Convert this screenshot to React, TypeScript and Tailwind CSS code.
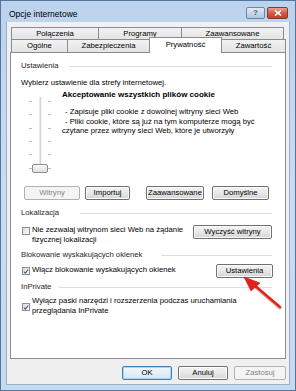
import React from 'react';

const font = { fontFamily: '"Liberation Sans", Arial, sans-serif' };

const btn =
  'h-[14px] flex items-center justify-center rounded-[2px] border border-[#707070] bg-linear-to-b from-[#f3f3f3] via-[#e8e8e8] to-[#d4d4d4] text-[7.7px] text-black leading-none shadow-[inset_0_0_0_1px_#fcfcfc]';
const btnDisabled =
  'h-[14px] flex items-center justify-center rounded-[2px] border border-[#adb2b5] bg-[#f4f4f4] text-[7.7px] text-[#838383] leading-none';

const GroupHeader: React.FC<{ label: string; line: string }> = ({ label, line }) => (
  <div className="flex items-center justify-between h-[10px] text-[7.7px] leading-[10px] text-[#1e1e1e]">
    <span>{label}</span>
    <div className={'h-px bg-[#d5dfe5] ' + line} />
  </div>
);

const Checkbox: React.FC<{ checked?: boolean; className?: string }> = ({ checked, className }) => (
  <div
    className={
      'w-[8px] h-[8px] shrink-0 border border-[#8e8f8f] bg-linear-to-br from-[#dcdcdc] to-[#fbfbfb] flex items-center justify-center ' +
      (className ?? '')
    }
  >
    {checked && (
      <svg width="7" height="7" viewBox="0 0 7 7">
        <path d="M1 3.6 L2.8 5.4 L6 1.2" fill="none" stroke="#3d5497" strokeWidth="1.3" />
      </svg>
    )}
  </div>
);

const Slider: React.FC = () => (
  <svg width="41" height="83" viewBox="0 0 41 83" className="shrink-0">
    <rect x="18.5" y="7" width="2" height="72" fill="#d6d6d6" />
    <rect x="20.5" y="7" width="1" height="72" fill="#ffffff" />
    {[11, 24, 38, 51, 64, 78].map((y) => (
      <g key={y}>
        <rect x="8" y={y} width="3" height="1" fill="#bdbdbd" />
        <rect x="27" y={y} width="3" height="1" fill="#bdbdbd" />
      </g>
    ))}
    <defs>
      <linearGradient id="thumb" x1="0" y1="0" x2="0" y2="1">
        <stop offset="0" stopColor="#fbfbfb" />
        <stop offset="1" stopColor="#dedede" />
      </linearGradient>
    </defs>
    <rect x="11.5" y="74.5" width="15" height="8" rx="1.5" fill="url(#thumb)" stroke="#8b8b8b" />
  </svg>
);

export default function App() {
  return (
    <div
      style={font}
      className="relative w-[296px] h-[391px] flex flex-col border border-[#56759c] bg-linear-to-b from-[#bcd3ee] via-[#c9dcf1] to-[#c6daf0] overflow-hidden"
    >
      {/* title bar */}
      <div className="h-[21px] shrink-0 flex items-start">
        <div className="mt-[8px] ml-[8px] text-[8.5px] leading-[10px] text-black">Opcje internetowe</div>
        <div className="ml-auto mt-[6px] mr-[7px] flex gap-[2px]">
          <div className="w-[19px] h-[12px] rounded-[2px] border border-[#6d84a3] bg-linear-to-b from-[#e3ecf7] via-[#c7d6ea] to-[#b3c7e1] flex items-center justify-center text-[8px] font-bold text-[#55657c] leading-none">
            ?
          </div>
          <div className="w-[21px] h-[12px] rounded-[2px] border border-[#7c3a33] bg-linear-to-b from-[#e8a193] via-[#d35845] to-[#c6402b] flex items-center justify-center">
            <svg width="8" height="6" viewBox="0 0 8 6">
              <path d="M1 0.5 L7 5.5 M7 0.5 L1 5.5" stroke="#ffffff" strokeWidth="1.6" />
            </svg>
          </div>
        </div>
      </div>

      {/* client area */}
      <div className="flex-1 mx-[5px] mb-[5px] bg-[#f0f0f0] flex flex-col pt-[5px] border border-[#9bb0c9] border-t-0">
        {/* tab row 1 */}
        <div className="h-[12px] flex pl-[4px] text-[7.7px] leading-none text-black">
          {[
            ['Połączenia', 'w-[88px]'],
            ['Programy', 'w-[84px]'],
            ['Zaawansowane', 'w-[103px]'],
          ].map(([t, w], i) => (
            <div
              key={t}
              className={
                w +
                ' h-full flex items-center justify-center border border-b-0 border-[#898c95] bg-linear-to-b from-[#f2f2f2] to-[#e4e4e4] ' +
                (i > 0 ? '-ml-px' : '')
              }
            >
              {t}
            </div>
          ))}
        </div>
        {/* tab row 2 */}
        <div className="h-[13px] flex pl-[4px] text-[7.7px] leading-none text-black relative z-10">
          <div className="w-[57px] h-full flex items-center justify-center border border-b-0 border-[#898c95] bg-linear-to-b from-[#f2f2f2] to-[#e4e4e4]">
            Ogólne
          </div>
          <div className="w-[83px] -ml-px h-full flex items-center justify-center border border-b-0 border-[#898c95] bg-linear-to-b from-[#f2f2f2] to-[#e4e4e4]">
            Zabezpieczenia
          </div>
          <div className="w-[73px] -ml-px -mt-[2px] h-[16px] flex items-start pt-[3px] justify-center border border-b-0 border-[#898c95] bg-white">
            Prywatność
          </div>
          <div className="w-[65px] -ml-px h-full flex items-center justify-center border border-b-0 border-[#898c95] bg-linear-to-b from-[#f2f2f2] to-[#e4e4e4]">
            Zawartość
          </div>
        </div>

        {/* panel */}
        <div className="ml-[3px] w-[276px] h-[307px] border border-[#898c95] bg-white pl-[10px] pr-[13px] pt-[8px] text-[7.7px] leading-[9.5px] text-black">
          <GroupHeader label="Ustawienia" line="w-[203px]" />
          <div className="mt-[7px] h-[10px] leading-[10px]">Wybierz ustawienie dla strefy internetowej.</div>

          <div className="mt-[2px] flex">
            <Slider />
            <div className="flex flex-col">
              <div className="text-[8px] font-bold leading-[10px]">Akceptowanie wszystkich plików cookie</div>
              <div className="mt-[7px] pl-[3px]">- Zapisuje pliki cookie z dowolnej witryny sieci Web</div>
              <div className="pl-[3px]">- Pliki cookie, które są już na tym komputerze mogą być</div>
              <div>czytane przez witryny sieci Web, które je utworzyły</div>
            </div>
          </div>

          <div className="mt-[13px] flex">
            <div className={btnDisabled + ' ml-[3px] w-[56px]'}>Witryny</div>
            <div className={btn + ' ml-[5px] w-[45px]'}>Importuj</div>
            <div className={btn + ' ml-[16px] w-[58px]'}>Zaawansowane</div>
            <div className={btn + ' ml-[8px] w-[57px]'}>Domyślne</div>
          </div>

          <div className="mt-[8px]">
            <GroupHeader label="Lokalizacja" line="w-[192px]" />
          </div>
          <div className="mt-[7px] flex">
            <Checkbox className="ml-px mt-[2px]" />
            <div className="ml-[2px]">
              Nie zezwalaj witrynom sieci Web na żądanie
              <br />
              fizycznej lokalizacji
            </div>
            <div className={btn + ' ml-auto w-[79px]'}>Wyczyść witryny</div>
          </div>

          <div className="mt-[6px]">
            <GroupHeader label="Blokowanie wyskakujących okienek" line="w-[111px]" />
          </div>
          <div className="mt-[4px] flex">
            <Checkbox checked className="ml-px mt-[3px]" />
            <div className="ml-[2px] mt-px">Włącz blokowanie wyskakujących okienek</div>
            <div className={btn + ' ml-auto -mr-px w-[57px]'}>Ustawienia</div>
          </div>

          <div className="mt-[4px]">
            <GroupHeader label="InPrivate" line="w-[213px]" />
          </div>
          <div className="mt-[4px] flex">
            <Checkbox checked className="ml-px mt-[7px]" />
            <div className="ml-[2px]">
              Wyłącz paski narzędzi i rozszerzenia podczas uruchamiania
              <br />
              przeglądania InPrivate
            </div>
          </div>
        </div>

        {/* dialog buttons */}
        <div className="mt-[7px] flex justify-end pr-[3px] gap-[6px]">
          <div className="h-[14px] w-[50px] flex items-center justify-center rounded-[2px] border border-[#3c7fb1] bg-linear-to-b from-[#f2f8fc] via-[#e4eff8] to-[#d2e4f2] shadow-[inset_0_0_0_1px_#a8d7f5] text-[7.7px] leading-none">
            OK
          </div>
          <div className={btn + ' w-[50px]'}>Anuluj</div>
          <div className={btnDisabled + ' w-[52px]'}>Zastosuj</div>
        </div>
      </div>

      {/* red annotation arrow */}
      <svg className="absolute left-0 top-0 pointer-events-none" width="296" height="391" viewBox="0 0 296 391">
        <path d="M279 307 L252 284" stroke="#9c1010" strokeWidth="3.2" strokeLinecap="round" opacity="0.35" />
        <path d="M279 306 L252 283" stroke="#e4221d" strokeWidth="2.4" strokeLinecap="round" />
        <path d="M243 276 L259 282 L250 290 Z" fill="#e4221d" stroke="#c81612" strokeWidth="0.6" strokeLinejoin="round" />
      </svg>
    </div>
  );
}
